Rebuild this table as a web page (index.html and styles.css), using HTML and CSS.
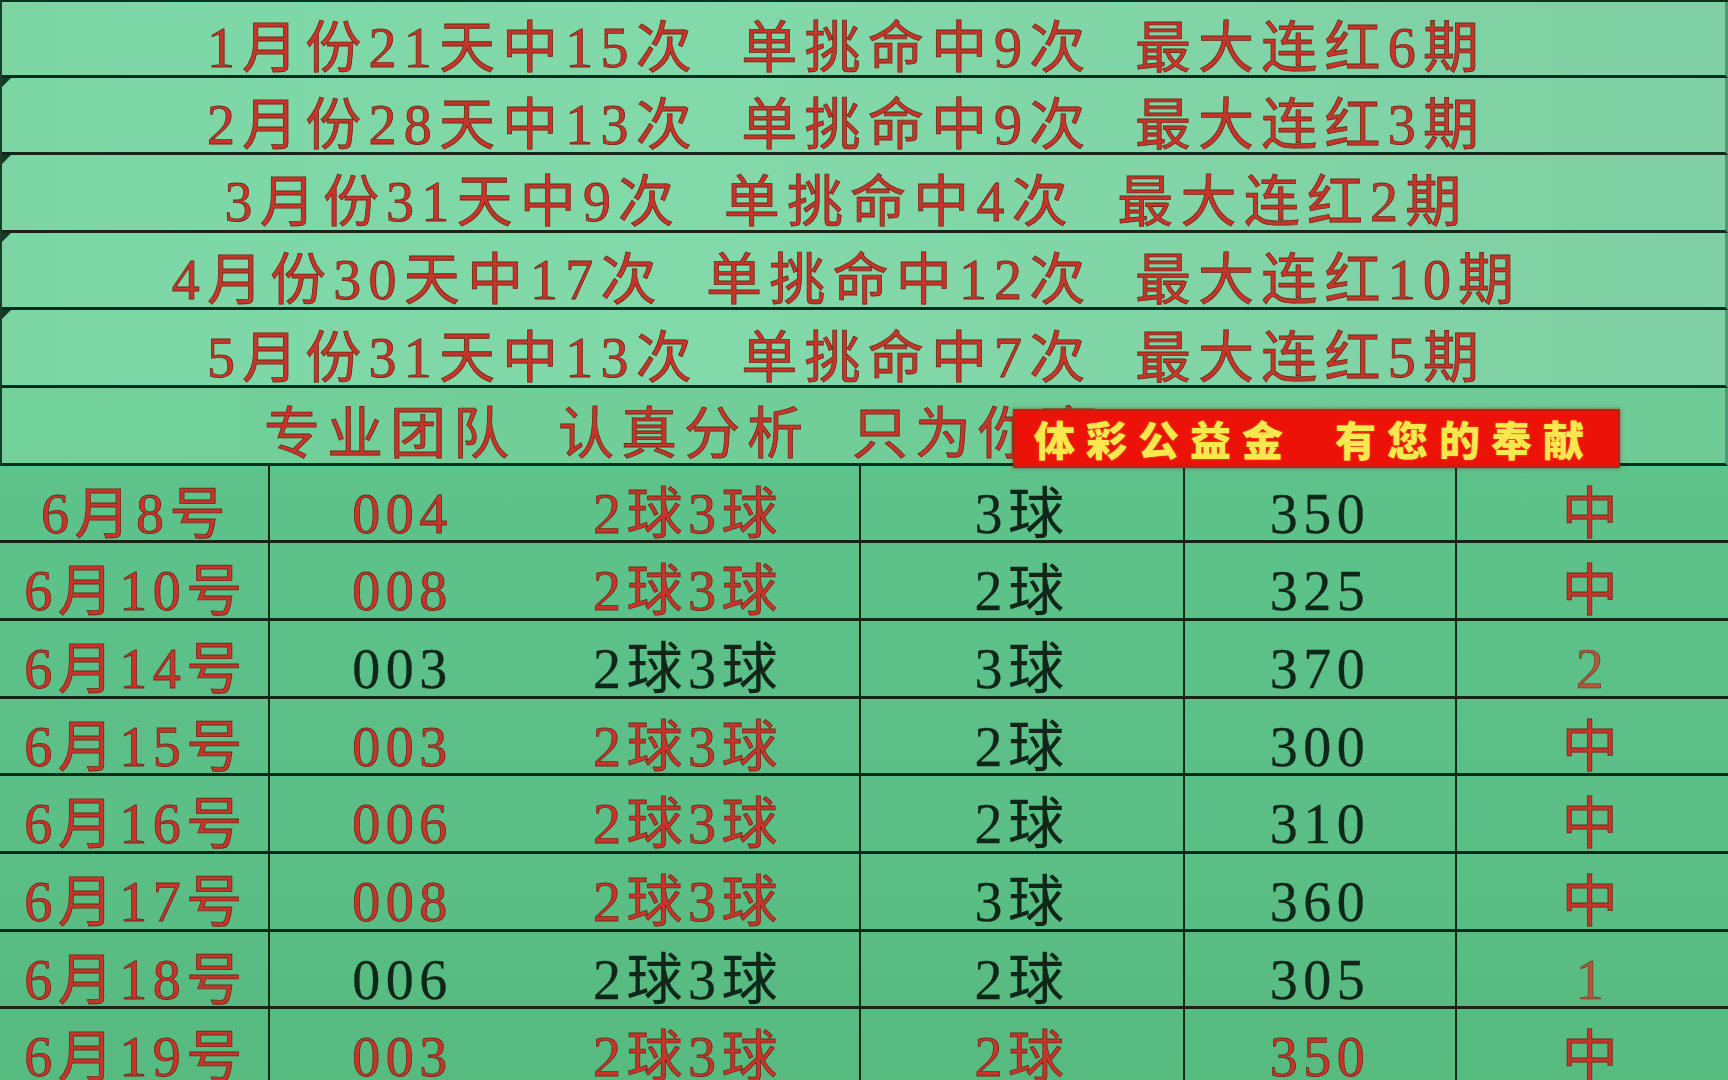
FILE: index.html
```html
<!DOCTYPE html>
<html lang="zh-CN">
<head>
<meta charset="utf-8">
<title>体彩记录</title>
<link rel="stylesheet" href="styles.css">
</head>
<body>
<div class="page">
  <section class="summary">
    <div class="sum-row"><span class="sum-text">1月份21天中15次  单挑命中9次  最大连红6期</span></div>
    <div class="sum-row mark"><span class="sum-text">2月份28天中13次  单挑命中9次  最大连红3期</span></div>
    <div class="sum-row mark"><span class="sum-text">3月份31天中9次  单挑命中4次  最大连红2期</span></div>
    <div class="sum-row mark"><span class="sum-text">4月份30天中17次  单挑命中12次  最大连红10期</span></div>
    <div class="sum-row mark"><span class="sum-text">5月份31天中13次  单挑命中7次  最大连红5期</span></div>
    <div class="sum-row head">
      <span class="head-text">专业团队  认真分析  只为你赢</span>
      <div class="banner">体彩公益金  有您的奉献</div>
    </div>
  </section>
  <section class="records">
    <div class="rec-row">
      <div class="cell date red">6月8号</div><div class="cell num red">004</div><div class="cell balls red">2球3球</div><div class="cell pick dark">3球</div><div class="cell sum dark">350</div><div class="cell res red">中</div>
    </div>
    <div class="rec-row">
      <div class="cell date red">6月10号</div><div class="cell num red">008</div><div class="cell balls red">2球3球</div><div class="cell pick dark">2球</div><div class="cell sum dark">325</div><div class="cell res red">中</div>
    </div>
    <div class="rec-row">
      <div class="cell date red">6月14号</div><div class="cell num dark">003</div><div class="cell balls dark">2球3球</div><div class="cell pick dark">3球</div><div class="cell sum dark">370</div><div class="cell res brown">2</div>
    </div>
    <div class="rec-row">
      <div class="cell date red">6月15号</div><div class="cell num red">003</div><div class="cell balls red">2球3球</div><div class="cell pick dark">2球</div><div class="cell sum dark">300</div><div class="cell res red">中</div>
    </div>
    <div class="rec-row">
      <div class="cell date red">6月16号</div><div class="cell num red">006</div><div class="cell balls red">2球3球</div><div class="cell pick dark">2球</div><div class="cell sum dark">310</div><div class="cell res red">中</div>
    </div>
    <div class="rec-row">
      <div class="cell date red">6月17号</div><div class="cell num red">008</div><div class="cell balls red">2球3球</div><div class="cell pick dark">3球</div><div class="cell sum dark">360</div><div class="cell res red">中</div>
    </div>
    <div class="rec-row">
      <div class="cell date red">6月18号</div><div class="cell num dark">006</div><div class="cell balls dark">2球3球</div><div class="cell pick dark">2球</div><div class="cell sum dark">305</div><div class="cell res brown">1</div>
    </div>
    <div class="rec-row">
      <div class="cell date red">6月19号</div><div class="cell num red">003</div><div class="cell balls red">2球3球</div><div class="cell pick red">2球</div><div class="cell sum red">350</div><div class="cell res red">中</div>
    </div>
  </section>
</div>
</body>
</html>
```

FILE: styles.css
```css
html, body {
  margin: 0;
  padding: 0;
}

body {
  width: 1728px;
  height: 1080px;
  overflow: hidden;
  background: #5dbf89;
  font-family: "Liberation Serif", "Noto Sans CJK SC", serif;
}

.page {
  width: 1728px;
  height: 1080px;
  overflow: hidden;
  display: flex;
  flex-direction: column;
}

.summary {
  display: flex;
  flex-direction: column;
  border-top: 2px solid #12301e;
  border-left: 2px solid #1c3b28;
  background: linear-gradient(90deg, #7cd6a4 0%, #82d9a9 40%, #7fd0a4 100%);
}

.sum-row {
  position: relative;
  box-sizing: border-box;
  height: 77.6px;
  border-bottom: 3px solid #10291a;
  border-right: 3px solid #4e9a72;
  display: flex;
  align-items: center;
  justify-content: center;
  padding-top: 20px;
  padding-right: 34px;
  white-space: pre;
}

.sum-row:first-child {
  height: 75.6px;
}

.sum-row.mark::before {
  content: "";
  position: absolute;
  left: 0;
  top: 0;
  width: 0;
  height: 0;
  border-top: 9px solid #173a24;
  border-right: 9px solid transparent;
}

.sum-text,
.head-text {
  font-size: 56px;
  letter-spacing: 7.2px;
  line-height: 1;
  color: #c6352a;
  -webkit-text-stroke: 0.8px #6e2a1b;
}

.sum-row.head {
  justify-content: flex-start;
  padding-left: 262px;
  padding-right: 0;
  padding-top: 18px;
  background: linear-gradient(90deg, #72d09b 0%, #6ecb96 100%);
}

.head-text {
  letter-spacing: 7px;
}

.banner {
  position: absolute;
  left: 1011px;
  top: 21px;
  width: 607px;
  height: 59px;
  box-sizing: border-box;
  background: #ec1208;
  border: 2px solid #c81c10;
  box-shadow: 0 0 4px rgba(150, 30, 10, 0.6);
  display: flex;
  align-items: center;
  justify-content: center;
  padding-right: 4px;
  font-family: "Noto Sans CJK SC", sans-serif;
  font-weight: 900;
  font-size: 41px;
  letter-spacing: 11px;
  line-height: 1;
  color: #ffe84e;
  text-shadow: 0 0 2px #ff8a1a, 0 0 1px #b81808;
  white-space: pre;
  z-index: 2;
}

.records {
  display: flex;
  flex-direction: column;
  background: linear-gradient(180deg, #5ec28b 0%, #5bbf87 50%, #57bb80 100%);
}

.rec-row {
  display: grid;
  grid-template-columns: 270px 265px 326px 324px 272px 271px;
  box-sizing: border-box;
  height: 77.7px;
  flex: none;
  border-bottom: 3px solid #0f2818;
}

.cell {
  display: flex;
  align-items: center;
  justify-content: center;
  box-sizing: border-box;
  padding-top: 20px;
  font-size: 56px;
  letter-spacing: 5.5px;
  line-height: 1;
  white-space: nowrap;
}

.cell.date,
.cell.pick,
.cell.sum {
  border-right: 2px solid #0f2818;
}

.cell.balls {
  border-right: 2px solid #0f2818;
  padding-right: 18px;
}

.cell.date {
  padding-left: 4px;
}

.red {
  color: #c6352a;
  -webkit-text-stroke: 0.8px #6e2a1b;
}

.brown {
  color: #b0583a;
  -webkit-text-stroke: 0.6px #6a3020;
}

.dark {
  color: #0f2619;
  -webkit-text-stroke: 0.3px #0f2619;
}
```
